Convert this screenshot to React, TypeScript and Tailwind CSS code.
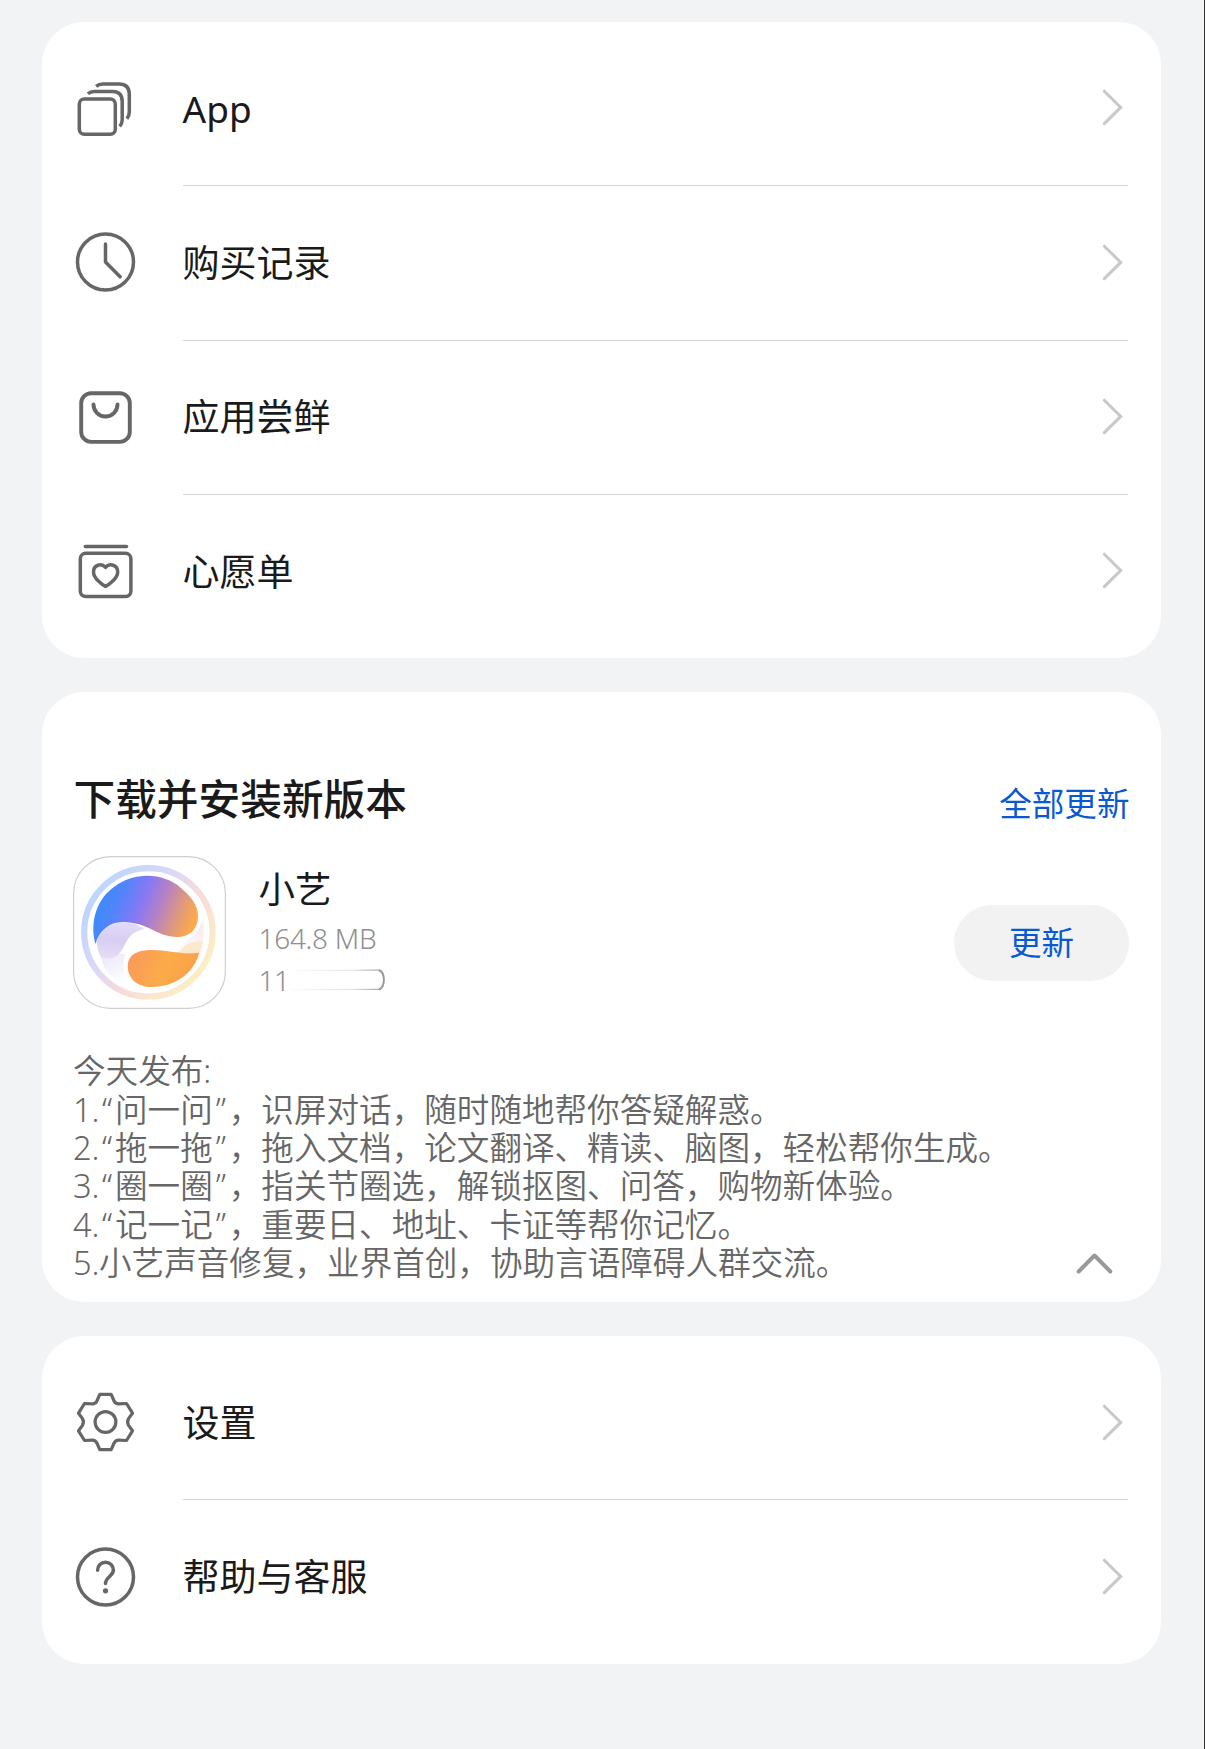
import type { ReactNode } from 'react';

type MenuItem = { label: string; icon: ReactNode };

function LineIcon({ children, width = 3.5 }: { children: ReactNode; width?: number }) {
  return (
    <svg
      viewBox="-0.5 0 60 60"
      className="w-[60px] h-[60px] shrink-0 overflow-visible text-[#666666]"
      fill="none"
      stroke="currentColor"
      strokeWidth={width}
      strokeLinecap="round"
      strokeLinejoin="round"
    >
      {children}
    </svg>
  );
}

const AppsIcon = () => (
  <LineIcon>
    <rect x="3.8" y="20.9" width="36" height="35.4" rx="5" />
    <g strokeLinecap="butt">
      <path d="M12.4 15.8Q15 13.5 18.5 13.5H37Q46.7 13.5 46.7 23.5V42Q46.7 45.5 44.2 48.4" />
      <path d="M20.6 8.4Q23.5 6 27 6H43.5Q53.8 6 53.8 16.5V34Q53.8 37.5 51.4 40.8" />
    </g>
  </LineIcon>
);

const ClockIcon = () => (
  <LineIcon>
    <circle cx="30" cy="30" r="28" />
    <path d="M30 12V30L44.6 44.8" />
  </LineIcon>
);

const BagIcon = () => (
  <LineIcon width={3.9}>
    <rect x="5.7" y="6.3" width="48.6" height="48.6" rx="10" />
    <path d="M18 17.5C18 24.5 23.5 29.5 30 29.5S42 24.5 42 17.5" />
  </LineIcon>
);

const WishIcon = () => (
  <LineIcon>
    <path d="M9.8 5.4H51" />
    <rect x="4.8" y="12.3" width="50.6" height="43.2" rx="5.5" />
    <path d="M30 45.4C27 44 18 37.5 18 31C18 24 26 21.6 30 26.4C34 21.6 42.2 24 42.2 31C42.2 37.5 33 44 30 45.4Z" />
  </LineIcon>
);

const GearIcon = () => (
  <LineIcon width={3.2}>
    <path d="M24.3 2.4H35.7L38.6 9Q40 12 43.3 11.9L51 11.5L57 21.2L53.2 26.4Q51 30 53.2 33.6L57 38.8L51 48.5L43.3 48.1Q40 48 38.6 51L35.7 57.6H24.3L21.4 51Q20 48 16.7 48.1L9 48.5L3 38.8L6.8 33.6Q9 30 6.8 26.4L3 21.2L9 11.5L16.7 11.9Q20 12 21.4 9Z" />
    <circle cx="30" cy="30" r="10.4" />
  </LineIcon>
);

const HelpIcon = () => (
  <LineIcon>
    <circle cx="30" cy="30" r="28" />
    <path d="M22.1 23.3C22.1 18.5 25.6 15.2 30 15.2S37.9 18.5 37.9 23C37.9 29.5 30 29.5 30 36.6" />
    <circle cx="30" cy="43.8" r="2.6" fill="currentColor" stroke="none" />
  </LineIcon>
);

const ChevronRight = () => (
  <svg viewBox="-0.3 0.6 22 38" className="w-[22px] h-[38px] shrink-0 mr-1" fill="none" stroke="#c8c8c8" strokeWidth="3" strokeLinecap="round">
    <path d="M2 2.8L18.4 19L2 35.2" />
  </svg>
);

const purchaseItems: MenuItem[] = [
  { label: 'App', icon: <AppsIcon /> },
  { label: '购买记录', icon: <ClockIcon /> },
  { label: '应用尝鲜', icon: <BagIcon /> },
  { label: '心愿单', icon: <WishIcon /> },
];

const supportItems: MenuItem[] = [
  { label: '设置', icon: <GearIcon /> },
  { label: '帮助与客服', icon: <HelpIcon /> },
];

function MenuCard({ items }: { items: MenuItem[] }) {
  return (
    <section className="bg-white rounded-[42px] pl-[33.5px] pr-[33px] pt-[9px] pb-[10px]">
      {items.map((item, i) => (
        <div key={item.label} className="flex items-center h-[154.3px]">
          {item.icon}
          <div className="ml-[47.5px] flex-1 h-full flex flex-col">
            <div className="flex-1 flex items-center justify-between pt-[0.5px]">
              <span className="text-[37px] leading-none text-[#1a1a1a]">{item.label}</span>
              <ChevronRight />
            </div>
            {i < items.length - 1 && <div className="h-px -mb-px bg-[#d6d6d6]" />}
          </div>
        </div>
      ))}
    </section>
  );
}

function AssistantLogo() {
  return (
    <svg viewBox="0 0 153 153" className="w-[153px] h-[153px] shrink-0">
      <defs>
        <linearGradient id="ring" x1="0.1" y1="0.2" x2="0.9" y2="0.85">
          <stop offset="0" stopColor="#bdd6fb" />
          <stop offset="0.35" stopColor="#dcd8f8" />
          <stop offset="0.6" stopColor="#f7dbdc" />
          <stop offset="1" stopColor="#fdefc2" />
        </linearGradient>
        <linearGradient id="wave" gradientUnits="userSpaceOnUse" x1="22" y1="50" x2="116" y2="88">
          <stop offset="0" stopColor="#3b8bfb" />
          <stop offset="0.2" stopColor="#5284fa" />
          <stop offset="0.42" stopColor="#8a78f3" />
          <stop offset="0.6" stopColor="#b581c4" />
          <stop offset="0.78" stopColor="#dc9880" />
          <stop offset="0.95" stopColor="#fba84e" />
        </linearGradient>
        <linearGradient id="drop" x1="0" y1="0.4" x2="1" y2="0.6">
          <stop offset="0" stopColor="#fb9a5a" />
          <stop offset="0.5" stopColor="#fcab48" />
          <stop offset="1" stopColor="#fb9f4c" />
        </linearGradient>
        <linearGradient id="mist" x1="0.6" y1="0" x2="0.4" y2="1">
          <stop offset="0" stopColor="#e2dcfb" />
          <stop offset="0.5" stopColor="#d9cdf3" />
          <stop offset="1" stopColor="#e6dcf3" />
        </linearGradient>
        <linearGradient id="haze" x1="0" y1="0" x2="0.4" y2="1">
          <stop offset="0" stopColor="#ebe7f7" />
          <stop offset="1" stopColor="#ffffff" />
        </linearGradient>
        <linearGradient id="blush" x1="1" y1="0" x2="0.2" y2="1">
          <stop offset="0" stopColor="#fbe6ee" />
          <stop offset="1" stopColor="#ffffff" />
        </linearGradient>
      </defs>
      <rect x="0.6" y="0.6" width="151.8" height="151.8" rx="37" fill="#ffffff" stroke="#cfcfcf" strokeWidth="1.2" />
      <circle cx="75.4" cy="76.3" r="64.2" fill="none" stroke="url(#ring)" strokeWidth="6.2" />
      <path d="M27 98C30 116 43 128 62 131C52 125 48 112 52 98Z" fill="url(#haze)" />
      <path d="M23.7 87C26 72 44 62 62 68L72 73C56 76 55 84 50 92C44 104 34 104 27 100Q24 94 23.7 87Z" fill="url(#mist)" />
      <path d="M129.5 64C124 82 110 84 98 98H127Q132 84 129.5 64Z" fill="url(#blush)" />
      <path d="M108 94C113 86 121 86 130 85L127 97Q116 98 104 97Z" fill="#fbe8cd" />
      <path d="M22.5 88C16 65 25 42 41 31C62 15 91 17 108 32C119 41 125 50 125 60C125 73 117 81 104 81C84 81 75 66 50 66C36 66 26 75 22.5 88Z" fill="url(#wave)" />
      <path d="M126.3 96.8C121 117 103 131 78 131C65 131 54.8 123 54.8 110.5C54.8 98 65 94 79 94C96 94 108 99 126.3 96.8Z" fill="url(#drop)" />
    </svg>
  );
}

// version string with its tail rubbed out
function MaskedVersion() {
  return (
    <div className="flex items-center h-[42px] text-[28px] leading-none text-[#8f8f8f]">
      <span className="font-light tracking-[-0.5px]">11</span>
      <svg viewBox="0 0 98 24" className="w-[98px] h-[24px]" fill="none">
        <defs>
          <linearGradient id="smudge" x1="0" x2="1">
            <stop offset="0" stopColor="#fafafa" />
            <stop offset="0.7" stopColor="#e4e4e4" />
            <stop offset="1" stopColor="#a8a8a8" />
          </linearGradient>
        </defs>
        <path d="M6 2.1L90 1.5L90 2.7L6 3Z" fill="url(#smudge)" />
        <path d="M3 21L90 20.8L90 21.9L3 22.2Z" fill="url(#smudge)" />
        <path d="M90 2C96.5 5 96.5 18.5 90 21.6" stroke="#999999" strokeWidth="2" />
      </svg>
    </div>
  );
}

const notes = [
  { no: '1.', quoted: '问一问', text: '，识屏对话，随时随地帮你答疑解惑。' },
  { no: '2.', quoted: '拖一拖', text: '，拖入文档，论文翻译、精读、脑图，轻松帮你生成。' },
  { no: '3.', quoted: '圈一圈', text: '，指关节圈选，解锁抠图、问答，购物新体验。' },
  { no: '4.', quoted: '记一记', text: '，重要日、地址、卡证等帮你记忆。' },
  { no: '5.', text: '小艺声音修复，业界首创，协助言语障碍人群交流。' },
];

function UpdateCard() {
  return (
    <section className="bg-white rounded-[42px] h-[610px] pl-[31px] pr-[32px] pt-[75px]">
      <div className="flex items-center justify-between h-[62px]">
        <h2 className="text-[41.7px] leading-none font-medium text-[#1a1a1a] pl-px pt-px">下载并安装新版本</h2>
        <button className="text-[32.6px] leading-none text-[#0a59d4] pt-[13px] -mr-px">全部更新</button>
      </div>

      <div className="mt-[27px] flex">
        <AssistantLogo />
        <div className="ml-[33px] flex-1 pt-[10px]">
          <p className="text-[36.5px] leading-[46px] text-[#1a1a1a]">小艺</p>
          <p className="text-[28px] leading-[42px] pt-[5px] font-light tracking-[-0.3px] text-[#8f8f8f]">164.8 MB</p>
          <MaskedVersion />
        </div>
        <button className="mt-[49px] w-[175px] h-[76px] rounded-full bg-[#f2f2f2] text-[32.6px] leading-none text-[#0a59d4] pl-px pt-px">
          更新
        </button>
      </div>

      <div className="mt-[43px] flex items-end justify-between">
        <div className="pl-[0.5px] text-[32.6px] leading-[38.4px] font-[350] text-[#666666] whitespace-nowrap">
          <p>今天发布:</p>
          {notes.map((note) => (
            <p key={note.no}>
              <span className="inline-block w-[26px]">{note.no}</span>
              {note.quoted && (
                <>
                  <span className="inline-block w-4 text-center">“</span>
                  {note.quoted}
                  <span className="inline-block w-4 text-center">”</span>
                </>
              )}
              {note.text}
            </p>
          ))}
        </div>
        <svg viewBox="-0.5 0.5 38 24" className="w-[38px] h-[24px] mr-[16px] mb-[7px]" fill="none" stroke="#999999" strokeWidth="4" strokeLinecap="round" strokeLinejoin="round">
          <path d="M3.2 20L19 4L34.8 20" />
        </svg>
      </div>
    </section>
  );
}

export default function App() {
  return (
    <main
      lang="zh-CN"
      className="w-full h-[1749px] overflow-hidden bg-[#f1f3f5] border-r border-[#333333] pt-[22px] pl-[41.5px] pr-[43.5px] flex flex-col gap-[34px] font-['Noto_Sans','Noto_Sans_CJK_SC',sans-serif]"
    >
      <MenuCard items={purchaseItems} />
      <UpdateCard />
      <MenuCard items={supportItems} />
    </main>
  );
}
